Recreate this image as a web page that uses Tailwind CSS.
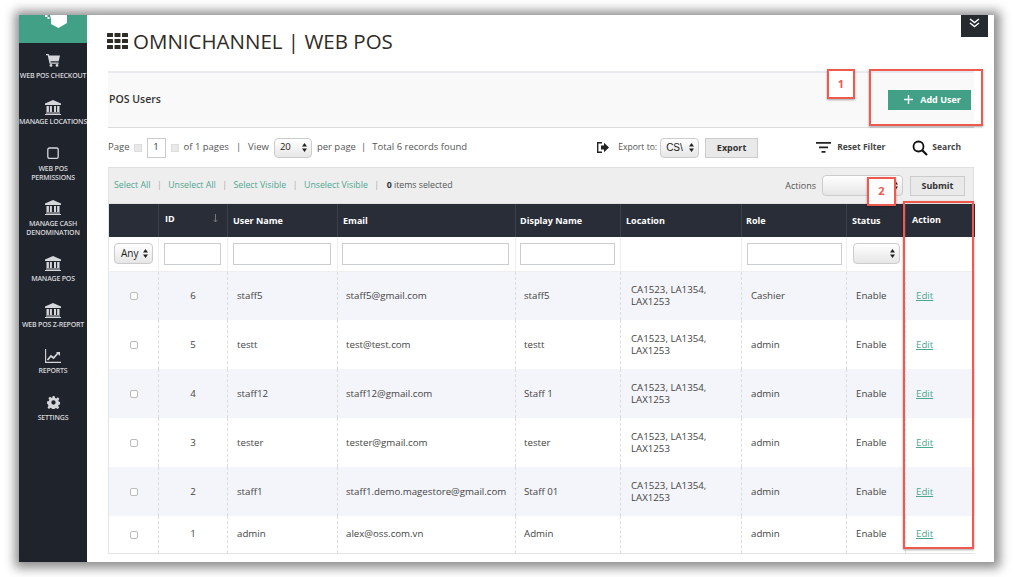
<!DOCTYPE html>
<html><head><meta charset="utf-8"><script src="https://cdn.jsdelivr.net/npm/@tailwindcss/browser@4"></script></head>
<body class="bg-white overflow-hidden font-['Open_Sans',sans-serif]">
<div class="w-[1014px] h-[577px] pt-[15px] pl-[19px] overflow-hidden">
<div class="relative w-[975px] h-[547px] flex bg-white shadow-[1px_1px_10px_5px_rgba(0,0,0,0.45)]">
  <!-- sidebar -->
  <aside class="w-[68px] shrink-0 bg-[#1f232c] text-[#d5d7da] overflow-hidden">
    <div class="h-[28px] bg-[#41a086] relative">
      <svg class="absolute left-[26px] top-0" width="22" height="13" viewBox="0 0 22 13" fill="#fff"><path d="M5 0h17v8l-8.500 5L6 9V4z"/><rect x="0" y="0" width="2.500" height="2"/><rect x="2.500" y="2" width="2" height="2"/></svg>
    </div>
    <div class="h-[9px]"></div>
    <nav class="flex flex-col text-[7px] leading-[9px] font-semibold text-center tracking-[-0.2px]">
      <a class="h-[46px] flex flex-col items-center"><svg class="mt-[2px] mb-[4px]" width="14" height="13" viewBox="0 0 14 13" fill="#d5d7da"><path d="M0 0h2.600l.5 1.600H14l-1.300 5.600H4.400l.4 1.300h7.900v1.200H3.600L1.700 1.200H0z"/><circle cx="5" cy="11.400" r="1.400"/><circle cx="11" cy="11.400" r="1.400"/></svg><span class="whitespace-nowrap">WEB POS CHECKOUT</span></a>
      <a class="h-[47px] flex flex-col items-center"><svg class="mt-[2px] mb-[2px]" width="16" height="15" viewBox="0 0 16 15" fill="#d5d7da"><path d="M8 0l8 3.600V5H0V3.600zM1.500 6h2.400v6H1.500zM4.900 6h2v6h-2zM9 6h2v6H9zM12.100 6h2.400v6h-2.400zM1 12.600h14v1H1zM0 14h16v1H0z"/></svg><span class="whitespace-nowrap">MANAGE LOCATIONS</span></a>
      <a class="h-[54px] flex flex-col items-center"><svg class="mt-[2px] mb-[4px]" width="12" height="13" viewBox="0 0 12 13" fill="none" stroke="#d5d7da" stroke-width="1.300"><rect x=".8" y="1" width="10.400" height="10.400" rx="1.600"/></svg><span>WEB POS<br>PERMISSIONS</span></a>
      <a class="h-[55px] flex flex-col items-center"><svg class="mt-[1px] mb-[4px]" width="16" height="15" viewBox="0 0 16 15" fill="#d5d7da"><path d="M8 0l8 3.600V5H0V3.600zM1.500 6h2.400v6H1.500zM4.900 6h2v6h-2zM9 6h2v6H9zM12.100 6h2.400v6h-2.400zM1 12.600h14v1H1zM0 14h16v1H0z"/></svg><span>MANAGE CASH<br>DENOMINATION</span></a>
      <a class="h-[47px] flex flex-col items-center"><svg class="mt-[2px] mb-[3px]" width="16" height="15" viewBox="0 0 16 15" fill="#d5d7da"><path d="M8 0l8 3.600V5H0V3.600zM1.500 6h2.400v6H1.500zM4.900 6h2v6h-2zM9 6h2v6H9zM12.100 6h2.400v6h-2.400zM1 12.600h14v1H1zM0 14h16v1H0z"/></svg><span>MANAGE POS</span></a>
      <a class="h-[46px] flex flex-col items-center"><svg class="mt-[2px] mb-[2px]" width="16" height="15" viewBox="0 0 16 15" fill="#d5d7da"><path d="M8 0l8 3.600V5H0V3.600zM1.500 6h2.400v6H1.500zM4.900 6h2v6h-2zM9 6h2v6H9zM12.100 6h2.400v6h-2.400zM1 12.600h14v1H1zM0 14h16v1H0z"/></svg><span class="whitespace-nowrap">WEB POS Z-REPORT</span></a>
      <a class="h-[47px] flex flex-col items-center"><svg class="mt-[2px] mb-[3px]" width="16" height="14" viewBox="0 0 16 14" fill="none" stroke="#d5d7da"><path d="M.6 0v13.400H16" stroke-width="1.100"/><path d="M2.500 11l3.500-4 2.500 2 5-5.500" stroke-width="1.700"/><path d="M11 3h4v4z" fill="#d5d7da" stroke="none"/></svg><span>REPORTS</span></a>
      <a class="h-[46px] flex flex-col items-center"><svg class="mt-[2px] mb-[4px]" width="13" height="13" viewBox="0 0 24 24" fill="#d5d7da"><path fill-rule="evenodd" d="M10 0h4l.7 3.400 2.300 1 3-1.900 2.800 2.800-1.900 3 1 2.300 3.100.7v4l-3.400.7-1 2.300 1.900 3-2.800 2.800-3-1.900-2.300 1-.7 3.100h-4l-.7-3.400-2.300-1-3 1.900-2.800-2.800 1.900-3-1-2.300L0 14v-4l3.400-.7 1-2.300-1.900-3 2.800-2.800 3 1.900 2.300-1zM12 8a4 4 0 100 8 4 4 0 000-8z"/></svg><span>SETTINGS</span></a>
    </nav>
  </aside>

  <!-- main -->
  <main class="flex-1 min-w-0 pl-[21px] pr-[20px] flex flex-col text-[#444]">
    <div class="h-[56px] shrink-0 flex items-start pt-[13px] gap-[5px]">
      <svg class="mt-[5px] -ml-[1px]" width="21" height="16" viewBox="0 0 21 16" fill="#2f2b26"><rect x="0" y="0" width="6" height="4" rx=".6"/><rect x="7.500" y="0" width="6" height="4" rx=".6"/><rect x="15" y="0" width="6" height="4" rx=".6"/><rect x="0" y="6" width="6" height="4" rx=".6"/><rect x="7.500" y="6" width="6" height="4" rx=".6"/><rect x="15" y="6" width="6" height="4" rx=".6"/><rect x="0" y="12" width="6" height="4" rx=".6"/><rect x="7.500" y="12" width="6" height="4" rx=".6"/><rect x="15" y="12" width="6" height="4" rx=".6"/></svg>
      <h1 class="text-[20.5px] leading-[26px] text-[#2f2b26] whitespace-nowrap">OMNICHANNEL | WEB POS</h1>
    </div>

    <div class="h-[57px] shrink-0 bg-[#f9f9f9] border-t-2 border-[#e9e9f0] border-b border-b-[#dcdcdc] flex items-center justify-between">
      <h2 class="text-[10.5px] font-semibold text-[#333] ml-[1px]">POS Users</h2>
      <button class="w-[83px] h-[20px] mr-[3px] mt-[-1px] pl-[6px] bg-[#41a086] text-white text-[9px] font-bold flex items-center justify-center gap-[7px]"><svg width="9" height="9" viewBox="0 0 9 9" stroke="#fff" stroke-width="1.400"><path d="M4.500 0v9M0 4.500h9"/></svg>Add User</button>
    </div>

    <div class="h-[39px] shrink-0 flex items-center text-[9.5px] text-[#555] whitespace-nowrap">
      <span class="-mt-[1px]">Page</span>
      <span class="w-[8px] h-[8px] ml-[4px] bg-[#e9e9e9] border border-[#ddd]"></span>
      <span class="w-[19px] h-[20px] ml-[5px] border border-[#ccc] flex items-center justify-center text-[#333]">1</span>
      <span class="w-[8px] h-[8px] ml-[5px] bg-[#e9e9e9] border border-[#ddd]"></span>
      <span class="ml-[5px] -mt-[1px]">of 1 pages</span>
      <span class="ml-[7px] -mt-[1px]">|</span>
      <span class="ml-[7px] -mt-[1px]">View</span>
      <span class="w-[38px] h-[20px] ml-[5px] rounded-[4px] border border-[#ccc] bg-gradient-to-b from-white to-[#e6e6e6] flex items-center justify-between pl-[5px] pr-[4px] text-[#222]">20<svg width="5" height="9" viewBox="0 0 5 9" fill="#222"><path d="M2.500 0L5 3.500H0zM2.500 9L0 5.500h5z"/></svg></span>
      <span class="ml-[5px] -mt-[1px]">per page</span>
      <span class="ml-[5px] -mt-[1px]">|</span>
      <span class="ml-[6px] -mt-[1px]">Total 6 records found</span>
      <svg class="ml-[129px]" width="13" height="13" viewBox="0 0 13 13" fill="#222"><path d="M1 1h5v1.400H2.400v8.200H6V12H1z"/><path d="M5 4.500h3V1.800L13 6.500l-5 4.700V8.500H5z"/></svg>
      <span class="ml-[9px] text-[8.6px] -mt-[1px]">Export to:</span>
      <span class="w-[39px] h-[20px] ml-[3px] rounded-[4px] border border-[#ccc] bg-gradient-to-b from-white to-[#e6e6e6] flex items-center justify-between pl-[5px] pr-[4px] text-[#222] text-[10px] font-['Liberation_Sans',sans-serif]">CS\<svg width="5" height="9" viewBox="0 0 5 9" fill="#222"><path d="M2.500 0L5 3.500H0zM2.500 9L0 5.500h5z"/></svg></span>
      <span class="w-[53px] h-[20px] ml-[6px] border border-[#ccc] bg-[#e9e9e9] flex items-center justify-center text-[9px] font-bold text-[#333]">Export</span>
      <svg class="ml-[58px]" width="15" height="11" viewBox="0 0 15 11" fill="#222"><path d="M0 0h15v1.800H0zM3 4.500h9v1.800H3zM5.500 9h4v1.800h-4z"/></svg>
      <span class="ml-[6px] text-[8.5px] font-bold text-[#444]">Reset Filter</span>
      <svg class="ml-[27px]" width="16" height="16" viewBox="0 0 16 16" fill="none" stroke="#111" stroke-width="1.800"><circle cx="6.500" cy="6.500" r="5"/><path d="M10.200 10.200L15 15" stroke-width="2.200"/></svg>
      <span class="ml-[4px] text-[8.5px] font-bold text-[#444]">Search</span>
    </div>

    <div class="h-[37px] shrink-0 bg-[#eeeeee] border border-[#e0e0e0] pl-[5px] pr-[8px] flex items-center text-[8.75px] whitespace-nowrap">
      <a class="text-[#4fa690]">Select All</a><span class="mx-[6.5px] text-[#aaa]">|</span>
      <a class="text-[#4fa690]">Unselect All</a><span class="mx-[6.5px] text-[#aaa]">|</span>
      <a class="text-[#4fa690]">Select Visible</a><span class="mx-[6.5px] text-[#aaa]">|</span>
      <a class="text-[#4fa690]">Unselect Visible</a><span class="mx-[6.5px] text-[#aaa]">|</span>
      <span class="text-[#555] ml-[1px]"><b class="text-[#333]">0</b> items selected</span>
      <span class="ml-auto text-[#555] text-[9px]">Actions</span>
      <span class="w-[81px] h-[21px] ml-[6px] rounded-[4px] border border-[#ccc] bg-gradient-to-b from-white to-[#e6e6e6] flex items-center justify-end pr-[4px]"><svg width="5" height="9" viewBox="0 0 5 9" fill="#222"><path d="M2.500 0L5 3.500H0zM2.500 9L0 5.500h5z"/></svg></span>
      <span class="w-[55px] h-[20px] ml-[7px] border border-[#ccc] bg-[#e9e9e9] flex items-center justify-center text-[9px] font-bold text-[#333]">Submit</span>
    </div>

    <table class="table-fixed w-[866px] border-collapse text-[9.7px] text-[#444] border-b border-b-[#e3e3e8] border-l border-l-[#e3e3e8]">
      <colgroup><col class="w-[50px]"><col class="w-[69px]"><col class="w-[110px]"><col class="w-[178px]"><col class="w-[105px]"><col class="w-[121px]"><col class="w-[105px]"><col class="w-[59px]"><col class="w-[69px]"></colgroup>
      <thead>
        <tr class="h-[33px] bg-[#292d38] text-white text-[9px] font-bold text-left">
          <th class="border-r border-[#3c404b]"></th>
          <th class="border-r border-[#3c404b] pl-[6px] pb-[4px] relative">ID<svg class="absolute right-[9px] top-[10px]" width="5" height="9" viewBox="0 0 5 9" stroke="#777" fill="none"><path d="M2.500 0v8M.5 6l2 2 2-2"/></svg></th>
          <th class="border-r border-[#3c404b] pl-[5px]">User Name</th>
          <th class="border-r border-[#3c404b] pl-[5px]">Email</th>
          <th class="border-r border-[#3c404b] pl-[4px]">Display Name</th>
          <th class="border-r border-[#3c404b] pl-[5px]">Location</th>
          <th class="border-r border-[#3c404b] pl-[4px]">Role</th>
          <th class="border-r border-[#3c404b] pl-[5px]">Status</th>
          <th class="pl-[6px] pb-[2px]">Action</th>
        </tr>
      </thead>
      <tbody>
        <tr class="h-[34px] bg-white border-b border-[#eeeeee]">
          <td class="border-r border-[#eeeeee] pl-[5px]"><span class="w-[39px] h-[21px] rounded-[4px] border border-[#ccc] bg-gradient-to-b from-white to-[#e6e6e6] flex items-center justify-between pl-[6px] pr-[4px] text-[#222] text-[10px]">Any<svg width="5" height="9" viewBox="0 0 5 9" fill="#222"><path d="M2.500 0L5 3.500H0zM2.500 9L0 5.500h5z"/></svg></span></td>
          <td class="border-r border-[#eeeeee] pl-[5px]"><div class="w-[57px] h-[22px] border border-[#c9ccd0] bg-white"></div></td>
          <td class="border-r border-[#eeeeee] pl-[5px]"><div class="w-[98px] h-[22px] border border-[#c9ccd0] bg-white"></div></td>
          <td class="border-r border-[#eeeeee] pl-[4px]"><div class="w-[167px] h-[22px] border border-[#c9ccd0] bg-white"></div></td>
          <td class="border-r border-[#eeeeee] pl-[4px]"><div class="w-[95px] h-[22px] border border-[#c9ccd0] bg-white"></div></td>
          <td class="border-r border-[#eeeeee]"></td>
          <td class="border-r border-[#eeeeee] pl-[5px]"><div class="w-[95px] h-[22px] border border-[#c9ccd0] bg-white"></div></td>
          <td class="border-r border-[#eeeeee] pl-[6px]"><span class="w-[47px] h-[21px] rounded-[4px] border border-[#ccc] bg-gradient-to-b from-white to-[#e6e6e6] flex items-center justify-end pr-[4px]"><svg width="5" height="9" viewBox="0 0 5 9" fill="#222"><path d="M2.500 0L5 3.500H0zM2.500 9L0 5.500h5z"/></svg></span></td>
          <td></td>
        </tr>
        <tr class="h-[49px] bg-[#f4f5fa] [&>td]:pt-[1px]">
          <td class="border-r border-dashed border-[#dcdcdc] text-center"><span class="inline-block align-middle w-[8px] h-[8px] rounded-[2px] border border-[#bbb] bg-white"></span></td>
          <td class="border-r border-dashed border-[#dcdcdc] text-center">6</td>
          <td class="border-r border-dashed border-[#dcdcdc] pl-[9px]">staff5</td>
          <td class="border-r border-dashed border-[#dcdcdc] pl-[8px]">staff5@gmail.com</td>
          <td class="border-r border-dashed border-[#dcdcdc] pl-[8px]">staff5</td>
          <td class="border-r border-dashed border-[#dcdcdc] pl-[10px] leading-[12px]">CA1523, LA1354, LAX1253</td>
          <td class="border-r border-dashed border-[#dcdcdc] pl-[9px]">Cashier</td>
          <td class="border-r border-dashed border-[#dcdcdc] pl-[9px]">Enable</td>
          <td class="pl-[10px]"><a class="underline text-[#4fa690]">Edit</a></td>
        </tr>
        <tr class="h-[49px] bg-white [&>td]:pt-[1px]">
          <td class="border-r border-dashed border-[#dcdcdc] text-center"><span class="inline-block align-middle w-[8px] h-[8px] rounded-[2px] border border-[#bbb] bg-white"></span></td>
          <td class="border-r border-dashed border-[#dcdcdc] text-center">5</td>
          <td class="border-r border-dashed border-[#dcdcdc] pl-[9px]">testt</td>
          <td class="border-r border-dashed border-[#dcdcdc] pl-[8px]">test@test.com</td>
          <td class="border-r border-dashed border-[#dcdcdc] pl-[8px]">testt</td>
          <td class="border-r border-dashed border-[#dcdcdc] pl-[10px] leading-[12px]">CA1523, LA1354, LAX1253</td>
          <td class="border-r border-dashed border-[#dcdcdc] pl-[9px]">admin</td>
          <td class="border-r border-dashed border-[#dcdcdc] pl-[9px]">Enable</td>
          <td class="pl-[10px]"><a class="underline text-[#4fa690]">Edit</a></td>
        </tr>
        <tr class="h-[49px] bg-[#f4f5fa] [&>td]:pt-[1px]">
          <td class="border-r border-dashed border-[#dcdcdc] text-center"><span class="inline-block align-middle w-[8px] h-[8px] rounded-[2px] border border-[#bbb] bg-white"></span></td>
          <td class="border-r border-dashed border-[#dcdcdc] text-center">4</td>
          <td class="border-r border-dashed border-[#dcdcdc] pl-[9px]">staff12</td>
          <td class="border-r border-dashed border-[#dcdcdc] pl-[8px]">staff12@gmail.com</td>
          <td class="border-r border-dashed border-[#dcdcdc] pl-[8px]">Staff 1</td>
          <td class="border-r border-dashed border-[#dcdcdc] pl-[10px] leading-[12px]">CA1523, LA1354, LAX1253</td>
          <td class="border-r border-dashed border-[#dcdcdc] pl-[9px]">admin</td>
          <td class="border-r border-dashed border-[#dcdcdc] pl-[9px]">Enable</td>
          <td class="pl-[10px]"><a class="underline text-[#4fa690]">Edit</a></td>
        </tr>
        <tr class="h-[49px] bg-white [&>td]:pt-[1px]">
          <td class="border-r border-dashed border-[#dcdcdc] text-center"><span class="inline-block align-middle w-[8px] h-[8px] rounded-[2px] border border-[#bbb] bg-white"></span></td>
          <td class="border-r border-dashed border-[#dcdcdc] text-center">3</td>
          <td class="border-r border-dashed border-[#dcdcdc] pl-[9px]">tester</td>
          <td class="border-r border-dashed border-[#dcdcdc] pl-[8px]">tester@gmail.com</td>
          <td class="border-r border-dashed border-[#dcdcdc] pl-[8px]">tester</td>
          <td class="border-r border-dashed border-[#dcdcdc] pl-[10px] leading-[12px]">CA1523, LA1354, LAX1253</td>
          <td class="border-r border-dashed border-[#dcdcdc] pl-[9px]">admin</td>
          <td class="border-r border-dashed border-[#dcdcdc] pl-[9px]">Enable</td>
          <td class="pl-[10px]"><a class="underline text-[#4fa690]">Edit</a></td>
        </tr>
        <tr class="h-[49px] bg-[#f4f5fa] [&>td]:pt-[1px]">
          <td class="border-r border-dashed border-[#dcdcdc] text-center"><span class="inline-block align-middle w-[8px] h-[8px] rounded-[2px] border border-[#bbb] bg-white"></span></td>
          <td class="border-r border-dashed border-[#dcdcdc] text-center">2</td>
          <td class="border-r border-dashed border-[#dcdcdc] pl-[9px]">staff1</td>
          <td class="border-r border-dashed border-[#dcdcdc] pl-[8px] whitespace-nowrap">staff1.demo.magestore@gmail.com</td>
          <td class="border-r border-dashed border-[#dcdcdc] pl-[8px]">Staff 01</td>
          <td class="border-r border-dashed border-[#dcdcdc] pl-[10px] leading-[12px]">CA1523, LA1354, LAX1253</td>
          <td class="border-r border-dashed border-[#dcdcdc] pl-[9px]">admin</td>
          <td class="border-r border-dashed border-[#dcdcdc] pl-[9px]">Enable</td>
          <td class="pl-[10px]"><a class="underline text-[#4fa690]">Edit</a></td>
        </tr>
        <tr class="h-[37px] bg-white [&>td]:pt-[1px]">
          <td class="border-r border-dashed border-[#dcdcdc] text-center"><span class="inline-block align-middle w-[8px] h-[8px] rounded-[2px] border border-[#bbb] bg-white"></span></td>
          <td class="border-r border-dashed border-[#dcdcdc] text-center">1</td>
          <td class="border-r border-dashed border-[#dcdcdc] pl-[9px]">admin</td>
          <td class="border-r border-dashed border-[#dcdcdc] pl-[8px]">alex@oss.com.vn</td>
          <td class="border-r border-dashed border-[#dcdcdc] pl-[8px]">Admin</td>
          <td class="border-r border-dashed border-[#dcdcdc]"></td>
          <td class="border-r border-dashed border-[#dcdcdc] pl-[9px]">admin</td>
          <td class="border-r border-dashed border-[#dcdcdc] pl-[9px]">Enable</td>
          <td class="pl-[10px]"><a class="underline text-[#4fa690]">Edit</a></td>
        </tr>
      </tbody>
    </table>
  </main>

  <!-- overlays -->
  <div class="absolute left-[942px] top-0 w-[27px] h-[22px] bg-[#252b2f] flex justify-center pt-[3px]"><svg width="11" height="10" viewBox="0 0 11 10" fill="none" stroke="#fff" stroke-width="1.400"><path d="M1 1l4.500 3.500L10 1M1 5l4.500 3.500L10 5"/></svg></div>
  <div class="absolute left-[808px] top-[54px] w-[28px] h-[30px] bg-white border-2 border-[#f0594d] shadow-[0_1px_2px_rgba(0,0,0,0.35)] flex items-center justify-center text-[11px] font-bold text-[#f0594d]">1</div>
  <div class="absolute left-[850px] top-[54px] w-[114px] h-[57px] border-2 border-[#f0594d] shadow-[0_1px_2px_rgba(0,0,0,0.35)]"></div>
  <div class="absolute left-[848px] top-[162px] w-[29px] h-[29px] bg-white border-2 border-[#f0594d] shadow-[0_1px_2px_rgba(0,0,0,0.35)] flex items-center justify-center text-[11px] font-bold text-[#f0594d]">2</div>
  <div class="absolute left-[884px] top-[186px] w-[71px] h-[348px] border-2 border-[#f0594d] shadow-[0_1px_2px_rgba(0,0,0,0.35)]"></div>
</div>
</div>
</body></html>
